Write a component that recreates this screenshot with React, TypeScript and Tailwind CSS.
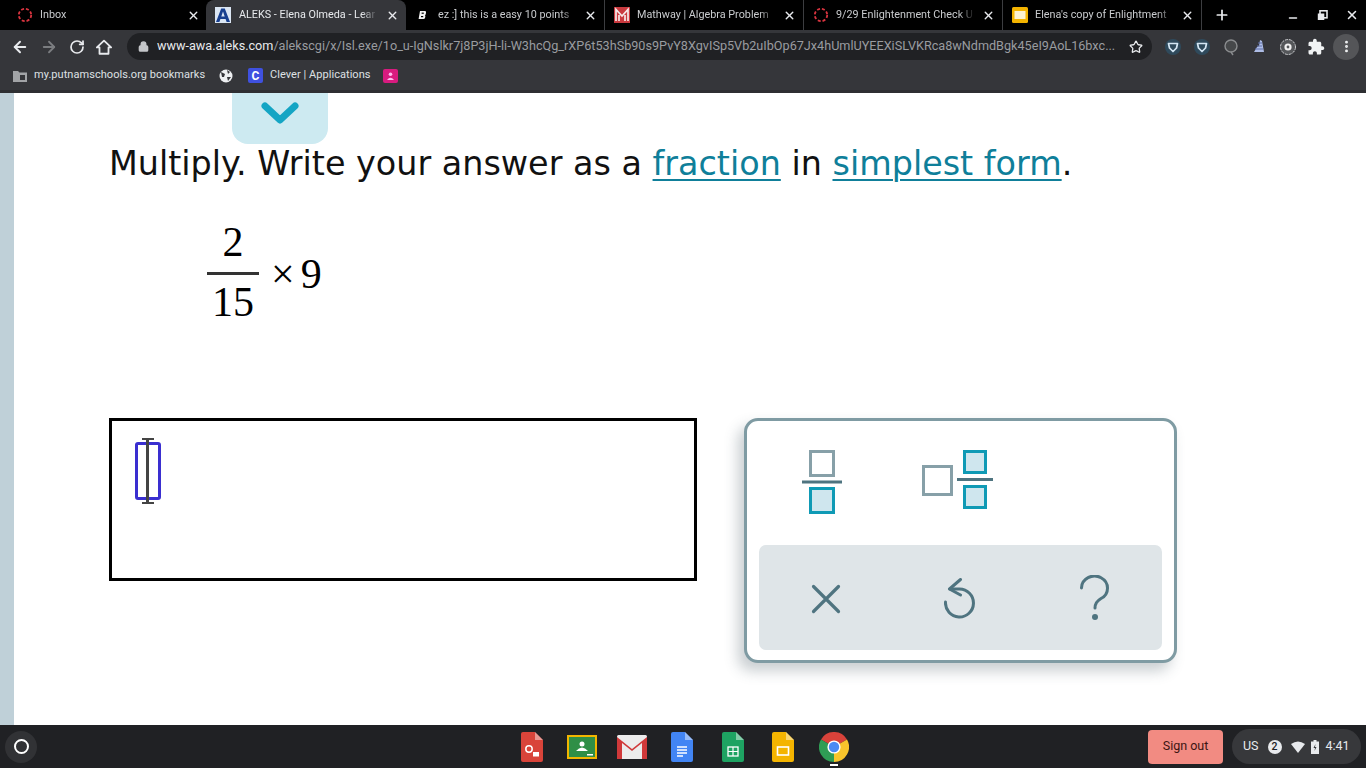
import React from "react";
import { ArrowLeft, ArrowRight, RotateCw, Lock, Star, Plus, X, Minus, MoreVertical } from "lucide-react";

const Ring = () => (
  <svg width="16" height="16" viewBox="0 0 16 16" className="shrink-0">
    <circle cx="8" cy="8" r="6.2" fill="none" stroke="#d9343f" strokeWidth="1.8" strokeDasharray="3 1.9" />
  </svg>
);
const ALogo = () => (
  <svg width="16" height="16" viewBox="0 0 16 16" className="shrink-0">
    <rect width="16" height="16" fill="#dbe6f3" />
    <path d="M1 15 L6.2 1.5 H9.8 L15 15 H11.6 L10.6 12 H5.4 L4.4 15Z M6.3 9.4 H9.7 L8 4.6Z" fill="#173f8f" fillRule="evenodd" />
  </svg>
);
const BLogo = () => (
  <svg width="16" height="16" viewBox="0 0 16 16" className="shrink-0">
    <path d="M5 4 H10 Q11.5 4 11 6 L10.6 7.6 Q10.4 8.2 9.8 8.3 Q10.6 8.6 10.3 9.8 L10 11 Q9.7 12 8.5 12 H3.6Z" fill="#f1f1f1" />
    <rect x="6.6" y="5.6" width="2.2" height="1.2" fill="#000" />
    <rect x="6" y="9" width="2.2" height="1.2" fill="#000" />
  </svg>
);
const MLogo = () => (
  <svg width="16" height="16" viewBox="0 0 16 16" className="shrink-0">
    <rect width="16" height="16" fill="#c93a3f" />
    <path d="M2 14 V2.5 L8 9 L14 2.5 V14 M5 14 V8 M11 14 V8" fill="none" stroke="#f5e9e9" strokeWidth="1.7" />
  </svg>
);
const SlideLogo = () => (
  <svg width="16" height="16" viewBox="0 0 16 16" className="shrink-0">
    <rect width="16" height="16" rx="1.5" fill="#f4b400" />
    <rect x="2.5" y="4" width="11" height="8" fill="#fdf3d0" />
  </svg>
);

const tabs = [
  { icon: <Ring />, label: "Inbox", w: "w-[198px] pr-[6px] gap-[7px]", active: false },
  { icon: <ALogo />, label: "ALEKS - Elena Olmeda - Lear", w: "w-[200px] pr-[7px] gap-[8px]", active: true },
  { icon: <BLogo />, label: "ez :] this is a easy 10 points", w: "w-[199px] pr-[7px] gap-[7px] border-r border-[#3c3d40]", active: false },
  { icon: <MLogo />, label: "Mathway | Algebra Problem", w: "w-[199px] pr-[7px] gap-[7px] border-r border-[#3c3d40]", active: false },
  { icon: <Ring />, label: "9/29 Enlightenment Check U", w: "w-[199px] pr-[7px] gap-[7px] border-r border-[#3c3d40]", active: false },
  { icon: <SlideLogo />, label: "Elena's copy of Enlightment", w: "w-[199px] pr-[7px] gap-[7px] border-r border-[#3c3d40]", active: false },
];

function Tab({ t }: { t: (typeof tabs)[number] }) {
  return (
    <div className={`${t.w} h-[30px] flex items-center pl-[9px] ${t.active ? "bg-[#35363a] rounded-t-lg" : ""}`}>
      {t.icon}
      <span className={`flex-1 min-w-0 overflow-hidden whitespace-nowrap text-[10.8px] [mask-image:linear-gradient(to_right,black_88%,transparent)] ${t.active ? "text-[#e8eaed]" : "text-[#c9cbce]"}`}>
        {t.label}
      </span>
      <X size={13} strokeWidth={2.6} className="text-[#e8eaed] shrink-0" />
    </div>
  );
}

const Shield = () => (
  <svg width="20" height="20" viewBox="0 0 20 20" className="shrink-0">
    <circle cx="10" cy="10" r="8" fill="#2f4a5c" />
    <path d="M5.5 6.5 H14.5 L13.5 11 L10 14.5 L6.5 11Z" fill="none" stroke="#d4e6f4" strokeWidth="1.7" strokeLinejoin="round" />
  </svg>
);

function Toolbar() {
  return (
    <div className="h-[33px] flex items-center bg-[#35363a]">
      <div className="w-[127px] flex items-center pl-[11px] gap-[11px] shrink-0">
        <ArrowLeft size={18} strokeWidth={2.6} className="text-[#e8eaed]" />
        <ArrowRight size={18} strokeWidth={2.4} className="text-[#7b7d80]" />
        <RotateCw size={16} strokeWidth={2.6} className="text-[#e8eaed]" />
        <svg width="18" height="18" viewBox="0 0 24 24" className="ml-[-1px] shrink-0">
          <path d="M2.5 12.5 L12 3.5 L21.5 12.5 H18 V21 H6 V12.5Z" fill="none" stroke="#e8eaed" strokeWidth="2.4" strokeLinejoin="round" />
        </svg>
      </div>
      <div className="w-[1025px] h-[27px] rounded-full bg-[#202124] flex items-center pl-[11px] pr-[9px] shrink-0">
        <Lock size={11} strokeWidth={3} className="text-[#c4c6c9] shrink-0" fill="#c4c6c9" />
        <div className="ml-[8px] w-[961px] overflow-hidden whitespace-nowrap text-[12.65px] text-[#9a9ca0]">
          <span className="text-[#e8eaed]">www-awa.aleks.com</span>/alekscgi/x/Isl.exe/1o_u-IgNslkr7j8P3jH-li-W3hcQg_rXP6t53hSb90s9PvY8XgvISp5Vb2uIbOp67Jx4hUmlUYEEXiSLVKRca8wNdmdBgk45eI9AoL16bxc...
        </div>
        <Star size={14} strokeWidth={2.2} className="text-[#e8eaed] ml-auto shrink-0" />
      </div>
      <div className="flex items-center flex-1 pl-[11px]">
        <Shield />
        <div className="w-[9px]" />
        <Shield />
        <div className="w-[9px]" />
        <svg width="20" height="20" viewBox="0 0 20 20" className="shrink-0">
          <circle cx="10" cy="9" r="6" fill="#46484a" stroke="#8b8d8f" strokeWidth="1.4" />
          <path d="M10 15 L12 18" stroke="#8b8d8f" strokeWidth="1.4" />
        </svg>
        <div className="w-[8px]" />
        <svg width="20" height="20" viewBox="0 0 20 20" className="shrink-0">
          <path d="M11 3 L13 4 L15 15 H5 L8 10 L10 9Z" fill="#aebde6" />
          <path d="M6 12 H14 M8 9 H13 M9 6 H13" stroke="#5f6ea8" strokeWidth="1" />
        </svg>
        <div className="w-[9px]" />
        <svg width="20" height="20" viewBox="0 0 20 20" className="shrink-0">
          <circle cx="10" cy="10" r="7.5" fill="#55575a" stroke="#c9cbce" strokeWidth="1" strokeDasharray="3 1" />
          <circle cx="10" cy="10" r="3.6" fill="#f1f1f1" />
          <circle cx="10" cy="10" r="1.4" fill="#55575a" />
        </svg>
        <div className="w-[9px]" />
        <svg width="18" height="18" viewBox="0 0 24 24" className="shrink-0">
          <path fill="#f1f3f4" d="M20.5 11H19V7c0-1.1-.9-2-2-2h-4V3.5C13 2.12 11.88 1 10.5 1S8 2.12 8 3.5V5H4c-1.1 0-1.99.9-1.99 2v3.8H3.5c1.49 0 2.7 1.21 2.7 2.7s-1.21 2.7-2.7 2.7H2V20c0 1.1.9 2 2 2h3.8v-1.5c0-1.49 1.21-2.7 2.7-2.7 1.49 0 2.7 1.21 2.7 2.7V22H17c1.1 0 2-.9 2-2v-4h1.5c1.38 0 2.5-1.12 2.5-2.5S21.88 11 20.5 11z" />
        </svg>
        <div className="w-[8px]" />
        <div className="w-[26px] h-[26px] rounded-full bg-[#545558] flex items-center justify-center shrink-0">
          <MoreVertical size={15} strokeWidth={2.6} className="text-[#f1f3f4]" />
        </div>
      </div>
    </div>
  );
}

function Bookmarks() {
  return (
    <div className="h-[30px] flex items-center bg-[#35363a] pl-[13px] pb-[2px] text-[11px] tracking-[0.05px] text-[#dfe1e4] border-b-[3px] border-[#2e2f32]">
      <svg width="14" height="12" viewBox="0 0 14 12" className="shrink-0">
        <path d="M0 1 H5 L6.5 2.5 H14 V12 H0Z" fill="#a2a4a7" />
        <rect x="7" y="5" width="5" height="5" fill="#35363a" />
      </svg>
      <span className="ml-[7px] w-[172px] whitespace-nowrap">my.putnamschools.org bookmarks</span>
      <svg width="14" height="14" viewBox="0 0 14 14" className="ml-[13px] shrink-0">
        <circle cx="7" cy="7" r="6.5" fill="#eef0f2" />
        <path d="M2 3 L6 5 L5 8 L3 8Z M8 1 L11 3 L9 5Z M8 8 L12 8 L9 12Z" fill="#35363a" />
      </svg>
      <span className="ml-[15px] w-[15px] h-[15px] bg-[#3f51e0] rounded-[2px] flex items-center justify-center text-white font-bold text-[12px] leading-none shrink-0">C</span>
      <span className="ml-[7px] w-[100px] whitespace-nowrap">Clever | Applications</span>
      <span className="ml-[13px] w-[15px] h-[14px] bg-[#d81b7f] rounded-[2px] flex items-center justify-center shrink-0">
        <svg width="9" height="8" viewBox="0 0 9 8"><circle cx="4.5" cy="2.2" r="1.8" fill="#fbe" /><path d="M1 8 Q4.5 3.5 8 8Z" fill="#fbe" /></svg>
      </span>
    </div>
  );
}

function FractionIcon() {
  return (
    <svg width="40" height="64" viewBox="0 0 40 64" className="block">
      <rect x="8.5" y="1.5" width="23" height="24" fill="#fff" stroke="#87a0a8" strokeWidth="3" />
      <rect x="0" y="30.5" width="40" height="3" fill="#4f7480" />
      <rect x="8.5" y="38.5" width="23" height="24" fill="#cfe6ee" stroke="#0f9ab5" strokeWidth="3" />
    </svg>
  );
}
function MixedIcon() {
  return (
    <svg width="71" height="60" viewBox="0 0 71 60" className="block">
      <rect x="1.5" y="16.5" width="28" height="28" fill="#fff" stroke="#87a0a8" strokeWidth="3" />
      <rect x="35" y="28" width="36" height="3" fill="#4f7480" />
      <rect x="42.5" y="1.5" width="21" height="21" fill="#cfe6ee" stroke="#0f9ab5" strokeWidth="3" />
      <rect x="42.5" y="36.5" width="21" height="21" fill="#cfe6ee" stroke="#0f9ab5" strokeWidth="3" />
    </svg>
  );
}

function Palette() {
  return (
    <div className="w-[433px] h-[245px] rounded-[14px] border-[3px] border-[#7f9ba3] bg-white shadow-[-6px_8px_14px_rgba(60,80,90,0.28)] flex flex-col px-[12px] pt-[29px]">
      <div className="h-[95px] flex items-start">
        <div className="ml-[43px]"><FractionIcon /></div>
        <div className="ml-[80px]"><MixedIcon /></div>
      </div>
      <div className="h-[105px] bg-[#dfe5e8] rounded-[7px] flex items-center pl-[52px]">
        <svg width="30" height="30" viewBox="0 0 30 30" className="block mt-[2px]">
          <path d="M2.5 2.5 L27.5 27.5 M27.5 2.5 L2.5 27.5" stroke="#4f7480" strokeWidth="3.2" strokeLinecap="round" />
        </svg>
        <svg width="32" height="44" viewBox="0 0 32 44" className="block ml-[103px] mt-[5px]">
          <path d="M6 11 H15.5 A14 14 0 1 1 1.5 24" fill="none" stroke="#4f7480" strokeWidth="3" strokeLinecap="round" />
          <path d="M16.5 1.5 L5.5 11 L16.5 17" fill="none" stroke="#4f7480" strokeWidth="3" strokeLinecap="round" strokeLinejoin="round" />
        </svg>
        <svg width="32" height="46" viewBox="0 0 32 46" className="block ml-[103px]">
          <path d="M2.5 13 A13 12 0 1 1 22 23.5 Q16 27 16 33" fill="none" stroke="#4f7480" strokeWidth="3" strokeLinecap="round" />
          <circle cx="16" cy="42" r="3" fill="#4f7480" />
        </svg>
      </div>
    </div>
  );
}

function Page() {
  return (
    <div className="flex-1 min-h-0 bg-white flex overflow-hidden">
      <div className="w-[14px] bg-[#bfd0d8] shrink-0" />
      <div className="flex-1 pl-[95px]">
        <div className="ml-[123px] w-[96px] h-[51px] rounded-b-[16px] bg-[#cdeaf1] flex justify-center pt-[9px]">
          <svg width="38" height="26" viewBox="0 0 38 26">
            <path d="M4 4 L19 18 L34 4" fill="none" stroke="#14a5c4" strokeWidth="7" strokeLinecap="round" strokeLinejoin="round" />
          </svg>
        </div>
        <div className="mt-[1px] font-['DejaVu_Sans',sans-serif] text-[33.4px] leading-[38px] text-[#111] whitespace-nowrap">
          Multiply. Write your answer as a <span className="text-[#0f7f9a] underline decoration-[2px] underline-offset-[4px]">fraction</span> in <span className="text-[#0f7f9a] underline decoration-[2px] underline-offset-[4px]">simplest form</span>.
        </div>
        <div className="mt-[37px] ml-[98px] flex items-center font-['Liberation_Serif',serif] text-[42px] leading-none text-black">
          <div className="w-[52px] flex flex-col items-center">
            <span className="leading-[44px] mb-[8px]">2</span>
            <span className="w-full h-[3px] bg-[#333]" />
            <span className="leading-[50px] mt-[2px]">15</span>
          </div>
          <span className="ml-[12px]">×</span>
          <span className="ml-[6px]">9</span>
        </div>
        <div className="mt-[91px] flex items-start gap-[47px]">
          <div className="w-[588px] h-[163px] border-[3px] border-black bg-white pl-[23px] pt-[21px]">
            <div className="relative w-[26px] h-[58px] border-[3px] border-[#3a2fd0] rounded-[3px]">
              <div className="absolute left-[8px] top-[-7px] w-[3px] h-[66px] bg-[#444]" />
              <div className="absolute left-[4px] top-[-7px] w-[12px] h-[2px] bg-[#444]" />
              <div className="absolute left-[4px] top-[57px] w-[12px] h-[2px] bg-[#444]" />
            </div>
          </div>
          <Palette />
        </div>
      </div>
    </div>
  );
}

const Doc = ({ color, children }: { color: string; children?: React.ReactNode }) => (
  <svg width="22" height="30" viewBox="0 0 22 30" className="shrink-0 block">
    <path d="M2 0 H14 L22 8 V28 Q22 30 20 30 H2 Q0 30 0 28 V2 Q0 0 2 0Z" fill={color} />
    <path d="M14 0 L22 8 H14Z" fill="#ffffff" fillOpacity="0.45" />
    {children}
  </svg>
);

function Shelf() {
  return (
    <div className="h-[43px] bg-[#202124] flex items-center shrink-0">
      <div className="w-[32px] h-[32px] ml-[5px] rounded-full bg-[#313235] flex items-center justify-center shrink-0">
        <div className="w-[15px] h-[15px] rounded-full border-2 border-white" />
      </div>
      <div className="ml-[484px] flex items-center w-[331px] shrink-0">
        <Doc color="#d9443a">
          <circle cx="8" cy="17" r="3.2" fill="none" stroke="#fff" strokeWidth="1.5" />
          <rect x="12" y="20" width="6" height="4.5" fill="#fff" />
        </Doc>
        <svg width="30" height="24" viewBox="0 0 30 24" className="ml-[24px] shrink-0">
          <rect width="30" height="24" fill="#f2b600" />
          <rect x="2" y="2" width="26" height="20" fill="#2f8f46" />
          <circle cx="15" cy="9" r="2.5" fill="#fff" />
          <path d="M9 16 Q15 9 21 16Z" fill="#fff" />
          <rect x="20" y="19" width="6" height="1.5" fill="#fff" />
        </svg>
        <svg width="30" height="24" viewBox="0 0 30 24" className="ml-[20px] shrink-0">
          <rect width="30" height="24" rx="1.5" fill="#ececec" />
          <path d="M0 2 L15 14 L30 2 V24 H25 V8 L15 16 L5 8 V24 H0Z" fill="#d0393a" />
        </svg>
        <div className="ml-[24px] shrink-0">
          <Doc color="#4285f4">
            <path d="M6 15 H16 M6 18 H16 M6 21 H16 M6 24 H12" stroke="#fff" strokeWidth="1.3" />
          </Doc>
        </div>
        <div className="ml-[29px] shrink-0">
          <Doc color="#1ea362">
            <rect x="6" y="15" width="10" height="9" fill="none" stroke="#fff" strokeWidth="1.3" />
            <path d="M6 19.5 H16 M11 15 V24" stroke="#fff" strokeWidth="1.2" />
          </Doc>
        </div>
        <div className="ml-[28px] shrink-0">
          <Doc color="#f4b400">
            <rect x="5.5" y="15" width="11" height="8" fill="none" stroke="#fff" strokeWidth="1.6" />
          </Doc>
        </div>
        <div className="ml-[25px] relative w-[30px] h-[30px] shrink-0">
          <svg width="30" height="30" viewBox="0 0 30 30" className="block">
            <path d="M15 15 L2 7.5 A15 15 0 0 1 28 7.5Z" fill="#d8423a" />
            <path d="M15 15 L2 7.5 A15 15 0 0 0 15 30Z" fill="#2f9d55" />
            <path d="M15 15 L15 30 A15 15 0 0 0 28 7.5Z" fill="#f8c52c" />
            <circle cx="15" cy="15" r="6.6" fill="#fff" />
            <circle cx="15" cy="15" r="5.2" fill="#4a8af4" />
          </svg>
          <div className="absolute left-[11px] top-[32px] w-[8px] h-[2px] bg-white" />
        </div>
      </div>
      <div className="ml-[296px] w-[75px] h-[34px] rounded-[4px] bg-[#f28b82] flex items-center justify-center text-[12.5px] font-['Roboto',sans-serif] text-[#3c1512] shrink-0">
        Sign out
      </div>
      <div className="ml-[9px] w-[129px] h-[35px] rounded-full bg-[#37383b] flex items-center pl-[11px] text-[12.5px] text-[#e8eaed] shrink-0">
        <span>US</span>
        <span className="ml-[9px] w-[14px] h-[14px] rounded-full bg-[#e8eaed] text-[#202124] text-[10.5px] font-medium flex items-center justify-center">2</span>
        <svg width="14" height="12" viewBox="0 0 14 12" className="ml-[9px]"><path d="M0 3 Q7 -2 14 3 L7 12Z" fill="#e8eaed" /></svg>
        <svg width="8" height="14" viewBox="0 0 8 14" className="ml-[6px]"><path d="M2.5 0 H5.5 V1.5 H8 V14 H0 V1.5 H2.5Z" fill="#e8eaed" /><path d="M4.5 4 L2.5 8 H4 L3.5 11 L5.5 7 H4Z" fill="#37383b" /></svg>
        <span className="ml-[7px]">4:41</span>
      </div>
    </div>
  );
}

export default function App() {
  return (
    <div className="w-[1366px] h-[768px] flex flex-col overflow-hidden font-['Roboto',sans-serif]">
      <div className="h-[30px] bg-black flex items-center pl-[8px] shrink-0">
        {tabs.map((t) => (
          <Tab key={t.label} t={t} />
        ))}
        <Plus size={16} strokeWidth={2.6} className="text-[#e8eaed] ml-[12px]" />
        <Minus size={12} strokeWidth={3} className="text-[#e8eaed] ml-[57px] mt-[6px]" />
        <svg width="11" height="11" viewBox="0 0 11 11" className="ml-[18px]">
          <rect x="3" y="0.8" width="7" height="7" fill="none" stroke="#e8eaed" strokeWidth="1.6" />
          <rect x="0.8" y="3.5" width="6.5" height="6.5" fill="#e8eaed" />
        </svg>
        <X size={14} strokeWidth={2.6} className="text-[#e8eaed] ml-[17px]" />
      </div>
      <Toolbar />
      <Bookmarks />
      <Page />
      <Shelf />
    </div>
  );
}
